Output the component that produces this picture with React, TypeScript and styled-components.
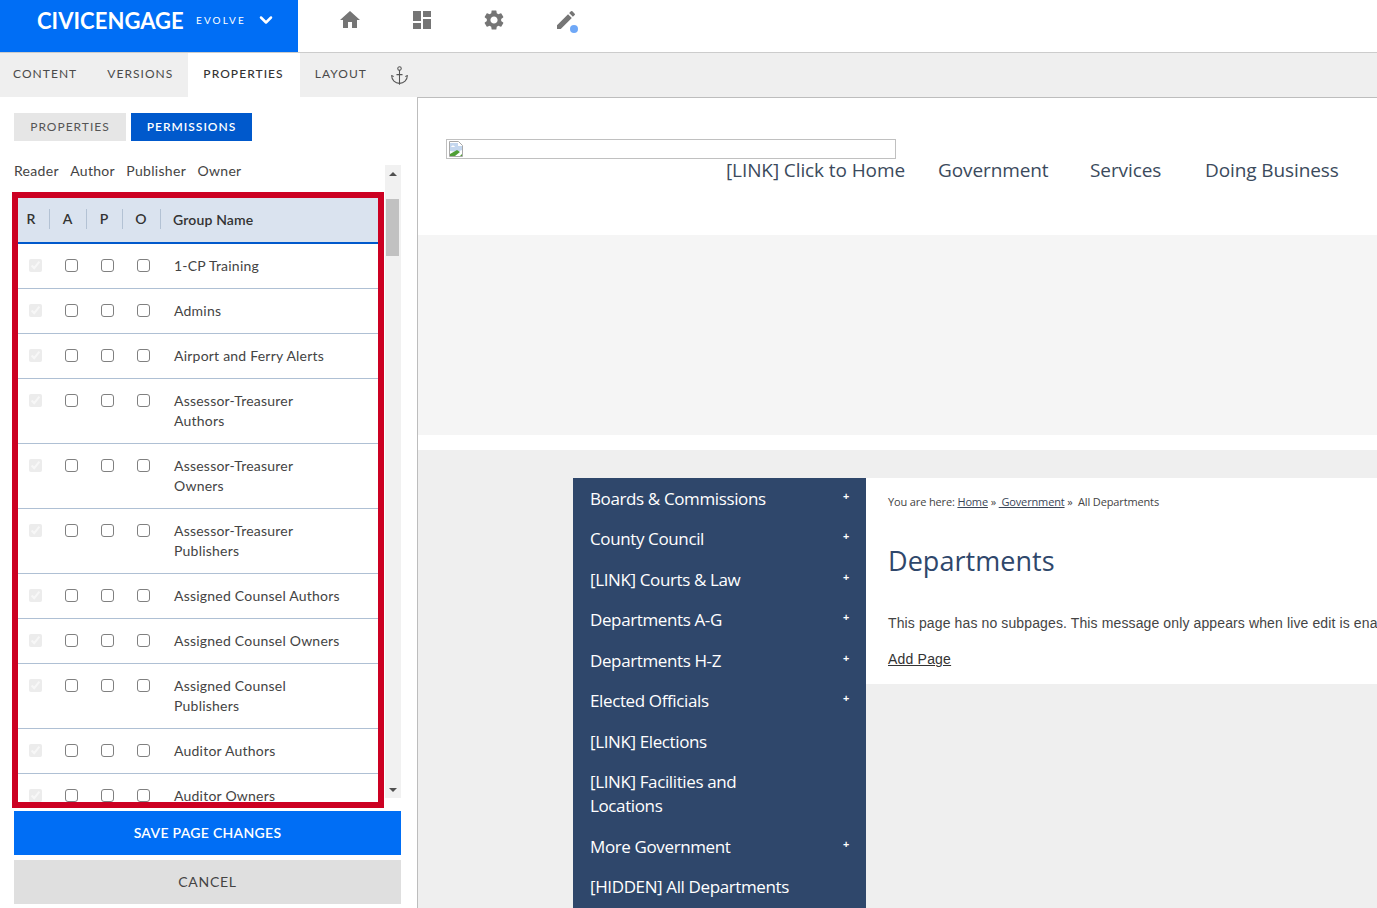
import React from 'react';
import styled, { createGlobalStyle } from 'styled-components';
import { MdHome, MdDashboard, MdSettings, MdEdit } from 'react-icons/md';
import { Anchor, ChevronDown } from 'lucide-react';

const GlobalStyle = createGlobalStyle`
  html, body {
    margin: 0;
    padding: 0;
    height: 100%;
    overflow: hidden;
    background: #fff;
    font-family: Lato, "Liberation Sans", sans-serif;
  }
  * { box-sizing: border-box; }
`;

const Page = styled.div`
  width: 1377px;
  height: 908px;
  display: flex;
  flex-direction: column;
  overflow: hidden;
`;

const TopBar = styled.header`
  height: 53px;
  flex: none;
  display: flex;
  border-bottom: 1px solid #ccc;
`;

const Brand = styled.div`
  width: 298px;
  height: 52px;
  background: #006ef5;
  color: #fff;
  display: flex;
  align-items: center;
  padding: 0 0 12px 37px;
`;

const BrandName = styled.span`
  font-size: 22px;
  font-weight: 700;
  letter-spacing: 0.05px;
  width: 159px;
  flex: none;
`;

const BrandEdition = styled.span`
  font-size: 10px;
  font-weight: 400;
  letter-spacing: 2.1px;
  width: 60px;
  flex: none;
`;

const IconRow = styled.nav`
  display: flex;
  margin-left: 16px;
`;

const IconButton = styled.div`
  position: relative;
  width: 72px;
  height: 40px;
  display: flex;
  align-items: center;
  justify-content: center;
  color: #757575;
`;

const StatusDot = styled.span`
  position: absolute;
  left: 40px;
  top: 25px;
  width: 8px;
  height: 8px;
  border-radius: 50%;
  background: #6fa8f7;
`;

const TabBar = styled.div`
  height: 44px;
  flex: none;
  display: flex;
  align-items: stretch;
  background: #efefef;
`;

const Tab = styled.div<{ $active?: boolean; $first?: boolean }>`
  display: flex;
  align-items: center;
  padding: 0 ${p => (p.$active ? '16px' : '15px')} 3px ${p => (p.$first ? '13px' : '15px')};
  background: ${p => (p.$active ? '#fff' : 'transparent')};
  color: ${p => (p.$active ? '#333' : '#4a4a4a')};
  font-size: 12px;
  font-weight: ${p => (p.$active ? 500 : 400)};
  letter-spacing: 1.05px;
`;

const AnchorIcon = styled.div`
  display: flex;
  align-items: center;
  margin-left: 7px;
  color: #555;
`;

const Body = styled.div`
  flex: 1;
  display: flex;
  min-height: 0;
`;

const Panel = styled.aside`
  width: 418px;
  flex: none;
  border-right: 1px solid #bdbdbd;
  padding: 16px 16px 0 14px;
`;

const SubTabs = styled.div`
  display: flex;
  gap: 5px;
  height: 28px;
`;

const SubTab = styled.div<{ $active?: boolean }>`
  width: ${p => (p.$active ? '121px' : '112px')};
  display: flex;
  align-items: center;
  justify-content: center;
  padding-bottom: 2px;
  background: ${p => (p.$active ? '#0059cc' : '#e6e6e6')};
  color: ${p => (p.$active ? '#fff' : '#555')};
  font-size: 12px;
  font-weight: ${p => (p.$active ? 600 : 400)};
  letter-spacing: 1px;
`;

const PermissionArea = styled.div`
  display: flex;
  height: 633px;
  margin-top: 24px;
`;

const PermissionColumn = styled.div`
  width: 371px;
  flex: none;
`;

const Legend = styled.div`
  display: flex;
  gap: 11.4px;
  height: 27px;
  font-size: 14px;
  line-height: 11px;
  letter-spacing: 0.3px;
  color: #444;
`;

const RedFrame = styled.div`
  width: 372px;
  height: 616px;
  margin-left: -2px;
  border: 6px solid #cc0022;
  overflow: hidden;
  background: #fff;
`;

const HeaderRow = styled.div`
  display: grid;
  grid-template-columns: 32px 37px 36px 38px 1fr;
  height: 46px;
  align-items: center;
  padding-bottom: 2px;
  background: #dae3ef;
  border-bottom: 2px solid #0059cc;
  color: #333;
  font-size: 14px;
  font-weight: 600;
`;

const HeaderCell = styled.div<{ $inset: number }>`
  height: 20px;
  line-height: 20px;
  text-align: center;
  border-right: 1px solid #b3c2d4;
  padding-right: ${p => p.$inset}px;
`;

const GroupHeading = styled.div`
  padding-left: 12px;
  letter-spacing: 0.15px;
`;

const GroupRow = styled.div`
  display: grid;
  grid-template-columns: 36px 36px 36px 36px 1fr;
  padding: 11px 0 0;
  min-height: 45px;
  border-bottom: 1px solid #afc0d4;
  color: #444;
  font-size: 14px;
  line-height: 20px;
  letter-spacing: 0.22px;
`;

const BoxCell = styled.div`
  padding: 4px 0 0 10.5px;
`;

const Box = styled.input`
  display: block;
  width: 13px;
  height: 13px;
  margin: 0;

  &:disabled {
    opacity: 0.4;
  }

  &:not(:disabled) {
    appearance: none;
    background: #fff;
    border: 1px solid #808080;
    border-radius: 3px;
  }
`;

const GroupName = styled.div`
  padding: 1px 36px 12px 12px;
`;

const Scrollbar = styled.div`
  width: 16px;
  flex: none;
  background: #f1f1f1;
  display: flex;
  flex-direction: column;
  align-items: center;
`;

const ScrollArrow = styled.div<{ $down?: boolean }>`
  width: 0;
  height: 0;
  margin: ${p => (p.$down ? 'auto 0 6px' : '7px 0 0')};
  border-left: 4px solid transparent;
  border-right: 4px solid transparent;
  ${p => (p.$down ? 'border-top: 4px solid #505050;' : 'border-bottom: 4px solid #505050;')}
`;

const ScrollThumb = styled.div`
  width: 13px;
  height: 57px;
  margin-top: 23px;
  margin-right: 2px;
  background: #c1c1c1;
`;

const SaveButton = styled.div`
  height: 44px;
  margin-top: 13px;
  padding-bottom: 2px;
  display: flex;
  align-items: center;
  justify-content: center;
  background: #006ef5;
  color: #fff;
  font-size: 14px;
  font-weight: 600;
  letter-spacing: 0.3px;
`;

const CancelButton = styled.div`
  height: 44px;
  margin-top: 5px;
  padding-bottom: 2px;
  display: flex;
  align-items: center;
  justify-content: center;
  background: #dfdfdf;
  color: #444;
  font-size: 14px;
  letter-spacing: 0.7px;
`;

const Preview = styled.main`
  flex: 1;
  min-width: 0;
  border-top: 1px solid #bdbdbd;
  overflow: hidden;
`;

const SiteHeader = styled.div`
  height: 137px;
  padding: 41px 0 0 28px;
  background: #fff;
`;

const BrokenImage = styled.div`
  width: 450px;
  height: 20px;
  border: 1px solid #c0c0c0;
  padding: 1px;
  display: flex;
`;

const SiteNav = styled.nav`
  display: flex;
  padding-left: 280px;
  height: 22px;
  line-height: 22px;
  font-family: "Open Sans", sans-serif;
  font-size: 19px;
  letter-spacing: -0.1px;
  color: #3b4a5c;
`;

const SiteLink = styled.a<{ $gap: number; $width: number }>`
  margin-left: ${p => p.$gap}px;
  width: ${p => p.$width}px;
  flex: none;
  white-space: nowrap;
`;

const Banner = styled.div`
  height: 200px;
  background: #f5f5f5;
`;

const Spacer = styled.div`
  height: 15px;
  background: #fff;
`;

const MainBand = styled.div`
  height: 460px;
  background: #efefef;
  padding: 28px 0 0 155px;
  display: flex;
  align-items: flex-start;
`;

const SideNav = styled.ul`
  width: 293px;
  flex: none;
  margin: 0;
  padding: 0.6px 0 0;
  list-style: none;
  background: #2f476b;
  color: #fff;
  font-family: "Open Sans", sans-serif;
  font-size: 17px;
  letter-spacing: -0.38px;
  line-height: 24px;
`;

const SideItem = styled.li`
  display: flex;
  justify-content: space-between;
  padding: 8.25px 17px;
`;

const SideLabel = styled.span`
  max-width: 215px;
`;

const Plus = styled.span`
  font-size: 11px;
  font-weight: 700;
  line-height: 18px;
`;

const Article = styled.div`
  flex: 1;
  min-width: 0;
  height: 206px;
  background: #fff;
  padding: 17px 0 0 22px;
  overflow: hidden;
  white-space: nowrap;
`;

const Breadcrumb = styled.div`
  font-family: "Open Sans", sans-serif;
  font-size: 11px;
  letter-spacing: -0.14px;
  line-height: 14px;
  color: #444;
`;

const CrumbLink = styled.a`
  text-decoration: underline;
  color: #3a4658;
`;

const Title = styled.h1`
  margin: 32px 0 0;
  font-family: "Open Sans", sans-serif;
  font-size: 27px;
  font-weight: 400;
  line-height: 40px;
  letter-spacing: 0.05px;
  color: #2f476b;
`;

const Message = styled.p`
  margin: 32px 0 0;
  font-family: "Liberation Sans", Arial, sans-serif;
  font-size: 14px;
  line-height: 20px;
  letter-spacing: 0.12px;
  color: #444;
`;

const AddPage = styled.a`
  display: block;
  margin-top: 16px;
  font-family: "Liberation Sans", Arial, sans-serif;
  font-size: 14px;
  line-height: 20px;
  letter-spacing: 0.2px;
  text-decoration: underline;
  color: #333;
`;

const groups = [
  '1-CP Training',
  'Admins',
  'Airport and Ferry Alerts',
  'Assessor-Treasurer Authors',
  'Assessor-Treasurer Owners',
  'Assessor-Treasurer Publishers',
  'Assigned Counsel Authors',
  'Assigned Counsel Owners',
  'Assigned Counsel Publishers',
  'Auditor Authors',
  'Auditor Owners',
];

const sideItems = [
  { label: 'Boards & Commissions', more: true },
  { label: 'County Council', more: true },
  { label: '[LINK] Courts & Law', more: true },
  { label: 'Departments A-G', more: true },
  { label: 'Departments H-Z', more: true },
  { label: 'Elected Officials', more: true },
  { label: '[LINK] Elections', more: false },
  { label: '[LINK] Facilities and Locations', more: false },
  { label: 'More Government', more: true },
  { label: '[HIDDEN] All Departments', more: false },
];

const BrokenIcon = () => (
  <svg width="16" height="16" viewBox="0 0 16 16">
    <path d="M1.5 .5h9l4 4v11h-13z" fill="#fff" stroke="#a8a8a8" />
    <path d="M2 2h8v3h4v4l-5 2-7-1z" fill="#c4d7ef" />
    <path d="M2 15v-2l7-4 3 2-5 4z" fill="#4f9e36" />
    <path d="M12 15l2-2v2z" fill="#4f9e36" />
    <path d="M3 6c1-2 3-2 4 0z" fill="#fff" />
  </svg>
);

export default function App() {
  return (
    <Page>
      <GlobalStyle />
      <TopBar>
        <Brand>
          <BrandName>CIVICENGAGE</BrandName>
          <BrandEdition>EVOLVE</BrandEdition>
          <ChevronDown size={20} strokeWidth={3} />
        </Brand>
        <IconRow>
          <IconButton><MdHome size={24} /></IconButton>
          <IconButton><MdDashboard size={24} /></IconButton>
          <IconButton><MdSettings size={24} /></IconButton>
          <IconButton><MdEdit size={24} /><StatusDot /></IconButton>
        </IconRow>
      </TopBar>
      <TabBar>
        <Tab $first>CONTENT</Tab>
        <Tab>VERSIONS</Tab>
        <Tab $active>PROPERTIES</Tab>
        <Tab>LAYOUT</Tab>
        <AnchorIcon><Anchor size={21} strokeWidth={1.2} /></AnchorIcon>
      </TabBar>
      <Body>
        <Panel>
          <SubTabs>
            <SubTab>PROPERTIES</SubTab>
            <SubTab $active>PERMISSIONS</SubTab>
          </SubTabs>
          <PermissionArea>
            <PermissionColumn>
              <Legend>
                <span>Reader</span>
                <span>Author</span>
                <span>Publisher</span>
                <span>Owner</span>
              </Legend>
              <RedFrame>
                <HeaderRow>
                  <HeaderCell $inset={5}>R</HeaderCell>
                  <HeaderCell $inset={1}>A</HeaderCell>
                  <HeaderCell $inset={1}>P</HeaderCell>
                  <HeaderCell $inset={1}>O</HeaderCell>
                  <GroupHeading>Group Name</GroupHeading>
                </HeaderRow>
                {groups.map(name => (
                  <GroupRow key={name}>
                    <BoxCell><Box type="checkbox" checked disabled readOnly /></BoxCell>
                    <BoxCell><Box type="checkbox" /></BoxCell>
                    <BoxCell><Box type="checkbox" /></BoxCell>
                    <BoxCell><Box type="checkbox" /></BoxCell>
                    <GroupName>{name}</GroupName>
                  </GroupRow>
                ))}
              </RedFrame>
            </PermissionColumn>
            <Scrollbar>
              <ScrollArrow />
              <ScrollThumb />
              <ScrollArrow $down />
            </Scrollbar>
          </PermissionArea>
          <SaveButton>SAVE PAGE CHANGES</SaveButton>
          <CancelButton>CANCEL</CancelButton>
        </Panel>
        <Preview>
          <SiteHeader>
            <BrokenImage><BrokenIcon /></BrokenImage>
            <SiteNav>
              <SiteLink $gap={0} $width={180}>[LINK] Click to Home</SiteLink>
              <SiteLink $gap={32} $width={108}>Government</SiteLink>
              <SiteLink $gap={44} $width={74}>Services</SiteLink>
              <SiteLink $gap={41} $width={133}>Doing Business</SiteLink>
            </SiteNav>
          </SiteHeader>
          <Banner />
          <Spacer />
          <MainBand>
            <SideNav>
              {sideItems.map(item => (
                <SideItem key={item.label}>
                  <SideLabel>{item.label}</SideLabel>
                  {item.more && <Plus>+</Plus>}
                </SideItem>
              ))}
            </SideNav>
            <Article>
              <Breadcrumb>
                You are here: <CrumbLink>Home</CrumbLink> »&nbsp;<CrumbLink>&nbsp;Government</CrumbLink> »&nbsp; All Departments
              </Breadcrumb>
              <Title>Departments</Title>
              <Message>This page has no subpages. This message only appears when live edit is enabled.</Message>
              <AddPage>Add Page</AddPage>
            </Article>
          </MainBand>
        </Preview>
      </Body>
    </Page>
  );
}
